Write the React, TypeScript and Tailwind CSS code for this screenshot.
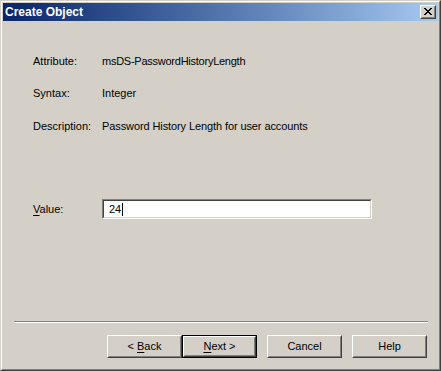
import React from "react";

const font = { fontFamily: '"Liberation Sans", Arial, sans-serif' };

function Btn({ children, def }: { children: React.ReactNode; def?: boolean }) {
  const inner = (
    <div className="h-full w-full border border-t-white border-l-white border-b-[#404040] border-r-[#404040]">
      <div className="flex h-full w-full items-center justify-center border border-t-[#d4d0c8] border-l-[#d4d0c8] border-b-[#808080] border-r-[#808080] text-[11px] leading-[13px] text-black">
        {children}
      </div>
    </div>
  );
  if (def) {
    return <div className="h-[23px] w-[75px] border border-black">{inner}</div>;
  }
  return <div className="h-[23px] w-[75px]">{inner}</div>;
}

function CloseGlyph() {
  const px: [number, number, number][] = [
    [0, 0, 2], [6, 0, 2],
    [1, 1, 2], [5, 1, 2],
    [2, 2, 4],
    [3, 3, 2],
    [2, 4, 4],
    [1, 5, 2], [5, 5, 2],
    [0, 6, 2], [6, 6, 2],
  ];
  return (
    <svg width="8" height="7" viewBox="0 0 8 7" shapeRendering="crispEdges">
      {px.map(([x, y, w], i) => (
        <rect key={i} x={x} y={y} width={w} height={1} fill="#000" />
      ))}
    </svg>
  );
}

export default function App() {
  return (
    <div style={font} className="h-[371px] w-[441px] bg-[#d4d0c8] text-black">
      <div className="h-full w-full border border-t-[#d4d0c8] border-l-[#d4d0c8] border-b-[#404040] border-r-[#404040]">
        <div className="flex h-full w-full flex-col border border-t-white border-l-white border-b-[#808080] border-r-[#808080] p-px">
          {/* Title bar */}
          <div className="flex h-[18px] shrink-0 items-start justify-between bg-gradient-to-r from-[#0a246a] to-[#a6caf0] pl-[2px] pr-[2px]">
            <div className="mt-[2px] text-[12px] font-bold leading-[14px] text-white">Create Object</div>
            <div className="mt-[2px] h-[14px] w-[16px] border border-t-white border-l-white border-b-[#404040] border-r-[#404040] bg-[#d4d0c8]">
              <div className="flex h-full w-full items-start justify-start border border-t-[#d4d0c8] border-l-[#d4d0c8] border-b-[#808080] border-r-[#808080] pl-[2px] pt-[1px]">
                <CloseGlyph />
              </div>
            </div>
          </div>

          {/* Content */}
          <div className="flex flex-1 flex-col pt-[34px] text-[11px] leading-[13px]">
            <div className="flex pl-[30px]">
              <div className="w-[69px]">Attribute:</div>
              <div className="tracking-[-0.25px]">msDS-PasswordHistoryLength</div>
            </div>
            <div className="mt-[19px] flex pl-[30px]">
              <div className="w-[69px]">Syntax:</div>
              <div>Integer</div>
            </div>
            <div className="mt-[20px] flex pl-[30px]">
              <div className="w-[69px]">Description:</div>
              <div className="tracking-[-0.1px]">Password History Length for user accounts</div>
            </div>

            <div className="mt-[66px] flex items-center pl-[30px]">
              <div className="w-[69px]">
                <span className="underline underline-offset-[2px]">V</span>alue:
              </div>
              <div className="h-[20px] w-[270px] border border-t-[#808080] border-l-[#808080] border-b-white border-r-white">
                <div className="flex h-full w-full items-center border border-t-[#404040] border-l-[#404040] border-b-[#d4d0c8] border-r-[#d4d0c8] bg-white pl-[5px]">
                  <span>24</span>
                  <span className="ml-px inline-block h-[13px] w-px bg-black" />
                </div>
              </div>
            </div>

            <div className="ml-[11px] mr-[10px] mt-[102px] h-[2px] border-t border-b border-t-[#808080] border-b-white" />

            <div className="mt-[12px] flex justify-end pr-[11px]">
              <Btn>
                &lt;&nbsp;<span className="underline underline-offset-[2px]">B</span>ack
              </Btn>
              <Btn def>
                <span className="underline underline-offset-[2px]">N</span>ext &gt;
              </Btn>
              <div className="ml-[10px]">
                <Btn>Cancel</Btn>
              </div>
              <div className="ml-[10px]">
                <Btn>Help</Btn>
              </div>
            </div>
          </div>
        </div>
      </div>
    </div>
  );
}
